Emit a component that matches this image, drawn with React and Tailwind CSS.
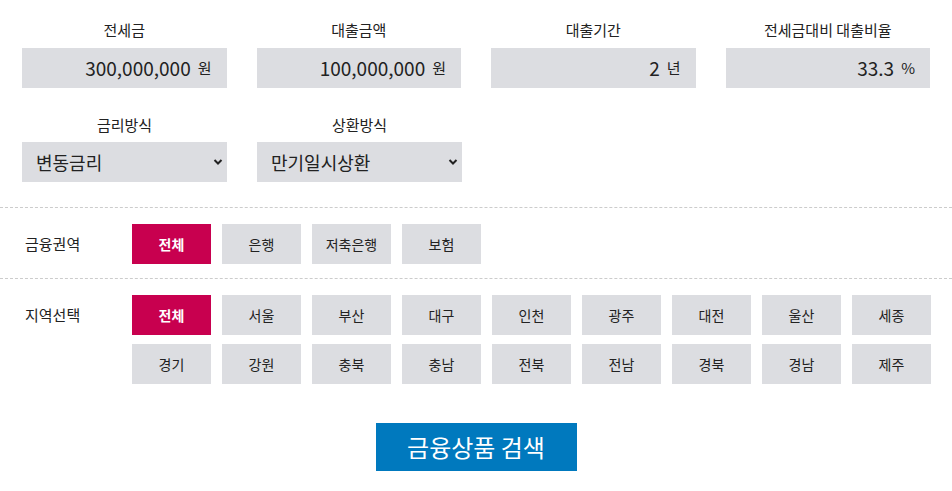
const fields = [
  { label: "전세금", value: "300,000,000", unit: "원" },
  { label: "대출금액", value: "100,000,000", unit: "원" },
  { label: "대출기간", value: "2", unit: "년" },
  { label: "전세금대비 대출비율", value: "33.3", unit: "%" },
];

const selects = [
  { label: "금리방식", options: ["변동금리", "고정금리"] },
  { label: "상환방식", options: ["만기일시상환", "원리금균등상환"] },
];

const sectors = ["전체", "은행", "저축은행", "보험"];
const regions = [
  "전체", "서울", "부산", "대구", "인천", "광주", "대전", "울산", "세종",
  "경기", "강원", "충북", "충남", "전북", "전남", "경북", "경남", "제주",
];

function Chip({ label, active }) {
  return (
    <button
      className={
        active
          ? "h-10 w-[79px] bg-[#c8004f] text-[14px] font-bold text-white"
          : "h-10 w-[79px] bg-[#dcdde1] text-[14px] text-[#222]"
      }
    >
      {label}
    </button>
  );
}

export default function App() {
  return (
    <div
      className="w-[952px] bg-white text-[#222]"
      style={{ fontFamily: '"Noto Sans CJK KR", "Noto Sans", sans-serif' }}
    >
      <div className="px-[22px] pt-5">
        <div className="flex gap-[30px]">
          {fields.map((f) => (
            <div key={f.label} className="w-[205px]">
              <div className="mb-2 text-center text-[15px] leading-5">{f.label}</div>
              <div className="flex h-10 items-center justify-end gap-[7px] bg-[#dcdde1] pr-[15px] text-[19px]">
                <span>{f.value}</span>
                <span className="text-[15px]">{f.unit}</span>
              </div>
            </div>
          ))}
        </div>

        <div className="mt-[27px] flex gap-[30px]">
          {selects.map((s) => (
            <div key={s.label} className="w-[205px]">
              <div className="mb-[7px] text-center text-[15px] leading-5">{s.label}</div>
              <div className="relative">
                <select className="h-10 w-full appearance-none bg-[#dcdde1] pl-[14px] text-[18px] outline-none">
                  {s.options.map((o) => (
                    <option key={o}>{o}</option>
                  ))}
                </select>
                <svg
                  className="pointer-events-none absolute right-[4px] top-[16px]"
                  width="10"
                  height="8"
                  viewBox="0 0 10 8"
                >
                  <path d="M1.5 2 L5 5.5 L8.5 2" fill="none" stroke="#222" strokeWidth="2" />
                </svg>
              </div>
            </div>
          ))}
        </div>
      </div>

      <div className="mt-[25px] border-t border-dashed border-[#cccccc]" />

      <div className="flex items-center py-4 pl-[25px]">
        <div className="w-[107px] text-[15px]">금융권역</div>
        <div className="flex gap-[11px]">
          {sectors.map((s, i) => (
            <Chip key={s} label={s} active={i === 0} />
          ))}
        </div>
      </div>

      <div className="mt-[-2px] border-t border-dashed border-[#cccccc]" />

      <div className="flex pl-[25px] pt-4">
        <div className="flex h-10 w-[107px] items-center text-[15px]">지역선택</div>
        <div className="grid grid-cols-[repeat(9,79px)] gap-x-[11px] gap-y-[9px]">
          {regions.map((r, i) => (
            <Chip key={r + i} label={r} active={i === 0} />
          ))}
        </div>
      </div>

      <div className="flex justify-center pb-5 pt-[39px]">
        <button className="h-12 w-[201px] bg-[#0079be] text-[24px] text-white">
          금융상품 검색
        </button>
      </div>
    </div>
  );
}
